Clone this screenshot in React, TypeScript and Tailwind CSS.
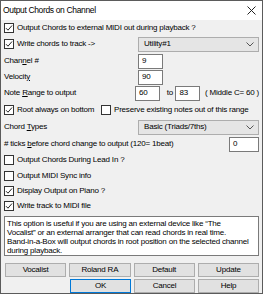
import React from 'react'

const font = { fontFamily: '"Liberation Sans", Arial, sans-serif' }

function Check({ checked }: { checked?: boolean }) {
  return (
    <span className="flex h-[10px] w-[10px] shrink-0 items-center justify-center border border-[#333] bg-white">
      {checked && (
        <svg width="8" height="8" viewBox="0 0 8 8">
          <path d="M1 4.2 L3 6.2 L7 1.5" fill="none" stroke="#222" strokeWidth="1" />
        </svg>
      )}
    </span>
  )
}

function CheckRow({ label, checked, className = '' }: { label: React.ReactNode; checked?: boolean; className?: string }) {
  return (
    <div className={`flex items-center gap-[3px] whitespace-nowrap ${className}`}>
      <Check checked={checked} />
      <span>{label}</span>
    </div>
  )
}

function Select({ value }: { value: string }) {
  return (
    <div className="flex h-[15px] w-[121px] items-center justify-between border border-[#adadad] bg-[#e5e5e5] pl-[5px] pr-[4px]">
      <span>{value}</span>
      <svg width="8" height="5" viewBox="0 0 8 5">
        <path d="M0.5 0.5 L4 4 L7.5 0.5" fill="none" stroke="#555" strokeWidth="1" />
      </svg>
    </div>
  )
}

function Input({ value, w = 'w-[25px]' }: { value: string; w?: string }) {
  return (
    <div className={`flex h-[15px] ${w} items-center border border-[#7a7a7a] bg-white pl-[3px]`}>
      {value}
    </div>
  )
}

function Btn({ label, primary }: { label: string; primary?: boolean }) {
  return (
    <div
      className={`flex h-[14px] w-[62px] items-center justify-center border bg-[#e1e1e1] ${
        primary ? 'border-[#0078d7]' : 'border-[#adadad]'
      }`}
    >
      {label}
    </div>
  )
}

export default function App() {
  return (
    <div
      style={font}
      className="h-[297px] w-[263px] whitespace-nowrap bg-white text-[8px] leading-none tracking-[-0.2px] text-black"
    >
      <div className="flex h-[294px] w-[263px] flex-col border border-[#5b5b5b] bg-[#f0f0f0]">
        {/* title bar */}
        <div className="flex h-[19px] items-center justify-between bg-white pl-[2px] pr-[6px] text-[8.5px] tracking-[-0.35px]">
          <span>Output Chords on Channel</span>
          <svg width="9" height="9" viewBox="0 0 9 9">
            <path d="M0.5 0.5 L8.5 8.5 M8.5 0.5 L0.5 8.5" stroke="#222" strokeWidth="1" />
          </svg>
        </div>

        <div className="flex flex-col px-[3px]">
          <CheckRow className="mt-[2px] h-[11px]" checked label="Output Chords to external MIDI out during playback ?" />

          <div className="mt-[3px] flex h-[16px] items-center justify-between">
            <CheckRow checked label="Write chords to track ->" />
            <Select value="Utility#1" />
          </div>

          <div className="mt-[1px] flex h-[16px] items-center">
            <span className="w-[134px]">
              Chan<u>n</u>el #
            </span>
            <Input value="9" />
          </div>

          <div className="flex h-[16px] items-center">
            <span className="w-[134px]">
              Velocit<u>y</u>
            </span>
            <Input value="90" />
          </div>

          <div className="flex h-[16px] items-center">
            <span className="w-[134px]">
              Note <u>R</u>ange to output
            </span>
            <Input value="60" />
            <span className="ml-[7px] w-[9px]">to</span>
            <Input value="83" />
            <span className="ml-[5px]">( Middle C= 60 )</span>
          </div>

          <div className="mt-[1px] flex h-[16px] items-center">
            <CheckRow className="w-[97px]" checked label="Root always on bottom" />
            <CheckRow label="Preserve existing notes out of this range" />
          </div>

          <div className="mt-[1px] flex h-[16px] items-center justify-between">
            <span>
              Chord <u>T</u>ypes
            </span>
            <Select value="Basic (Triads/7ths)" />
          </div>

          <div className="mt-[1px] flex h-[16px] items-center justify-between">
            <span>
              # ticks <u>b</u>efore chord change to output (120= 1beat)
            </span>
            <Input value="0" w="w-[30px]" />
          </div>

          <CheckRow className="mt-[1px] h-[14px]" label="Output Chords During Lead In ?" />
          <CheckRow className="mt-[1px] h-[15px]" label="Output MIDI Sync info" />
          <CheckRow className="h-[15px]" checked label="Display Output on Piano ?" />
          <CheckRow className="h-[15px]" checked label="Write track to MIDI file" />

          <div className="mt-[3px] h-[40px] border border-[#7a7a7a] bg-white px-[2px] pt-[2px] leading-[9px]">
            This option is useful if you are using an external device like “The
            <br />
            Vocalist” or an external arranger that can read chords in real time.
            <br />
            Band-in-a-Box will output chords in root position on the selected channel
            <br />
            during playback.
          </div>

          <div className="mt-[7px] flex gap-[3px] pl-[1px]">
            <Btn label="Vocalist" />
            <Btn label="Roland RA" />
            <Btn label="Default" />
            <Btn label="Update" />
          </div>
          <div className="mt-[2px] flex gap-[3px] pl-[66px]">
            <Btn label="OK" primary />
            <Btn label="Cancel" />
            <Btn label="Help" />
          </div>
        </div>
      </div>
    </div>
  )
}
